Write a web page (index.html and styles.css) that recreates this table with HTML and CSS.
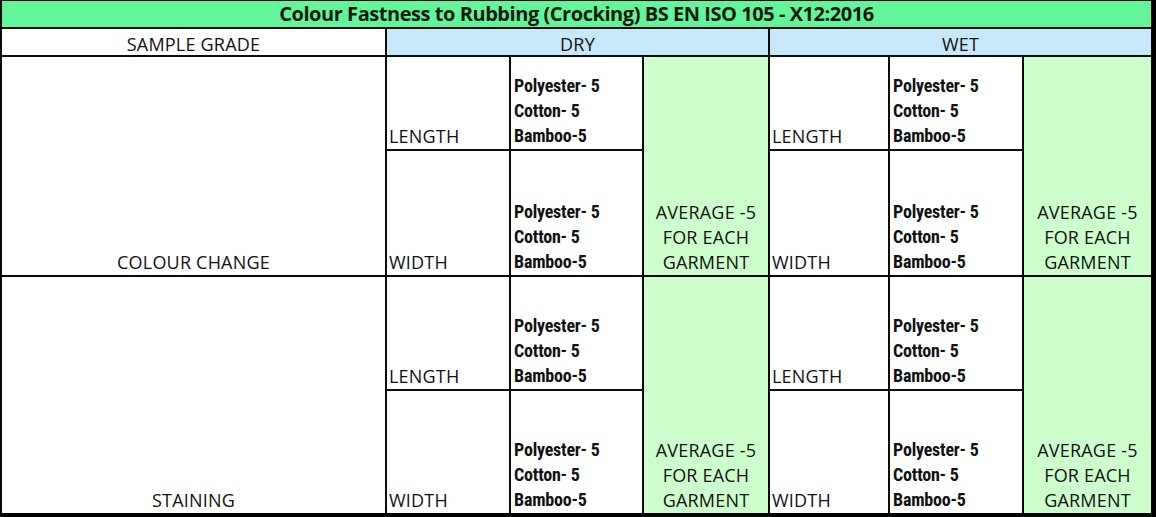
FILE: index.html
```html
<!DOCTYPE html>
<html lang="en">
<head>
<meta charset="utf-8">
<title>Colour Fastness to Rubbing</title>
<link rel="stylesheet" href="styles.css">
</head>
<body>
<div class="sheet">
  <div class="cell title">Colour Fastness to Rubbing (Crocking) BS EN ISO 105 - X12:2016</div>

  <div class="cell head">SAMPLE GRADE</div>
  <div class="cell head blue span3">DRY</div>
  <div class="cell head blue span3">WET</div>

  <div class="cell grade span-rows">COLOUR CHANGE</div>
  <div class="cell dir">LENGTH</div>
  <div class="cell vals"><span>Polyester- 5</span><span>Cotton- 5</span><span>Bamboo-5</span></div>
  <div class="cell avg span-rows"><span>AVERAGE -5</span><span>FOR EACH</span><span>GARMENT</span></div>
  <div class="cell dir">LENGTH</div>
  <div class="cell vals"><span>Polyester- 5</span><span>Cotton- 5</span><span>Bamboo-5</span></div>
  <div class="cell avg span-rows"><span>AVERAGE -5</span><span>FOR EACH</span><span>GARMENT</span></div>
  <div class="cell dir">WIDTH</div>
  <div class="cell vals"><span>Polyester- 5</span><span>Cotton- 5</span><span>Bamboo-5</span></div>
  <div class="cell dir">WIDTH</div>
  <div class="cell vals"><span>Polyester- 5</span><span>Cotton- 5</span><span>Bamboo-5</span></div>

  <div class="cell grade span-rows">STAINING</div>
  <div class="cell dir">LENGTH</div>
  <div class="cell vals"><span>Polyester- 5</span><span>Cotton- 5</span><span>Bamboo-5</span></div>
  <div class="cell avg span-rows"><span>AVERAGE -5</span><span>FOR EACH</span><span>GARMENT</span></div>
  <div class="cell dir">LENGTH</div>
  <div class="cell vals"><span>Polyester- 5</span><span>Cotton- 5</span><span>Bamboo-5</span></div>
  <div class="cell avg span-rows"><span>AVERAGE -5</span><span>FOR EACH</span><span>GARMENT</span></div>
  <div class="cell dir">WIDTH</div>
  <div class="cell vals"><span>Polyester- 5</span><span>Cotton- 5</span><span>Bamboo-5</span></div>
  <div class="cell dir">WIDTH</div>
  <div class="cell vals"><span>Polyester- 5</span><span>Cotton- 5</span><span>Bamboo-5</span></div>
</div>
</body>
</html>
```
FILE: styles.css
```css
html, body {
  margin: 0;
  padding: 0;
  background: #000;
}

body {
  width: 1156px;
  height: 517px;
  overflow: hidden;
  font-family: "Open Sans", "Liberation Sans", sans-serif;
  color: #111;
}

.sheet {
  display: grid;
  width: max-content;
  grid-template-columns: 383px 122px 131px 124px 118px 132px 127px;
  grid-template-rows: 26px 26px 92px 124px 112px 122px;
  gap: 2px;
  padding: 1px 0 0 2px;
  background: #0b0b0b;
}

.cell {
  background: #fff;
  display: flex;
  flex-direction: column;
  justify-content: flex-end;
  font-size: 18px;
  letter-spacing: 0.2px;
  line-height: 25px;
  padding: 0 3px;
  white-space: nowrap;
  min-width: 0;
}

.title {
  grid-column: 1 / -1;
  background: #64f59a;
  justify-content: flex-start;
  align-items: center;
  font-size: 20px;
  font-weight: 700;
  letter-spacing: -0.45px;
  line-height: 26px;
  color: #0c1a0e;
}

.head {
  align-items: center;
  line-height: 22px;
}

.blue {
  background: #c6e8fa;
}

.span3 {
  grid-column: span 3;
}

.span-rows {
  grid-row: span 2;
}

.grade {
  align-items: center;
}

.dir {
  align-items: flex-start;
  padding-left: 2px;
}

.vals {
  font-family: "Roboto", "Open Sans", sans-serif;
  font-stretch: condensed;
  font-weight: 700;
  font-size: 18px;
  letter-spacing: -0.2px;
  padding-bottom: 1px;
}

.vals span, .avg span {
  display: block;
}

.avg {
  background: #ccffcc;
  align-items: center;
}
```
